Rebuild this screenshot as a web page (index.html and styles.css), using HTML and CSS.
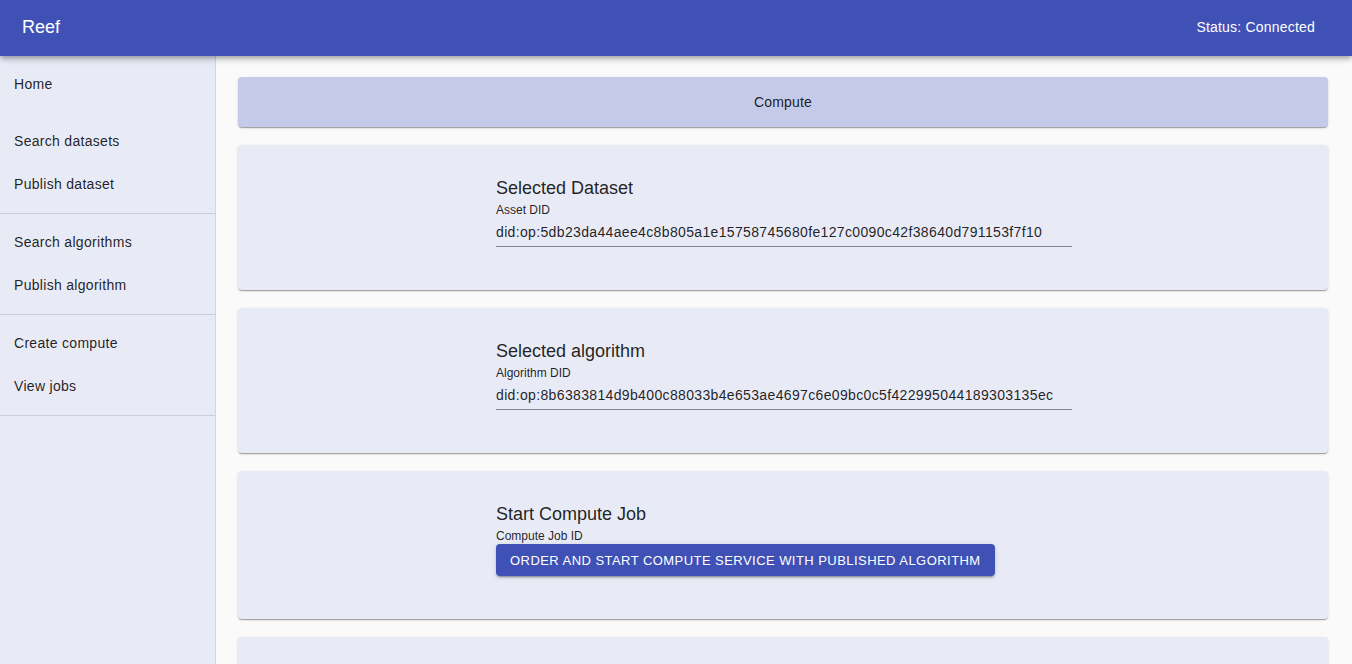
FILE: index.html
```html
<!DOCTYPE html>
<html lang="en">
<head>
<meta charset="utf-8">
<title>Reef</title>
<link rel="stylesheet" href="styles.css">
</head>
<body>
<header class="appbar">
  <div class="brand">Reef</div>
  <div class="status">Status: Connected</div>
</header>
<div class="layout">
  <nav class="sidebar">
    <ul class="nav-list nav-home">
      <li class="nav-item">Home</li>
    </ul>
    <ul class="nav-list nav-first">
      <li class="nav-item">Search datasets</li>
      <li class="nav-item">Publish dataset</li>
    </ul>
    <ul class="nav-list">
      <li class="nav-item">Search algorithms</li>
      <li class="nav-item">Publish algorithm</li>
    </ul>
    <ul class="nav-list">
      <li class="nav-item">Create compute</li>
      <li class="nav-item">View jobs</li>
    </ul>
  </nav>
  <main class="main">
    <div class="title-card">Compute</div>
    <section class="card">
      <div class="card-body">
        <h2 class="card-title">Selected Dataset</h2>
        <div class="field-label">Asset DID</div>
        <div class="field-input">did:op:5db23da44aee4c8b805a1e15758745680fe127c0090c42f38640d791153f7f10</div>
      </div>
    </section>
    <section class="card">
      <div class="card-body">
        <h2 class="card-title">Selected algorithm</h2>
        <div class="field-label">Algorithm DID</div>
        <div class="field-input">did:op:8b6383814d9b400c88033b4e653ae4697c6e09bc0c5f422995044189303135ec</div>
      </div>
    </section>
    <section class="card">
      <div class="card-body">
        <h2 class="card-title">Start Compute Job</h2>
        <div class="field-label">Compute Job ID</div>
        <button class="btn-primary">Order and start compute service with published algorithm</button>
      </div>
    </section>
    <section class="card card-last"></section>
  </main>
</div>
</body>
</html>
```
FILE: styles.css
```css
* { box-sizing: border-box; }
html, body { margin: 0; padding: 0; height: 100%; overflow: hidden; }
body {
  font-family: "Liberation Sans", Arial, Helvetica, sans-serif;
  color: rgba(0, 0, 0, 0.87);
  background: #fafafa;
  letter-spacing: 0.15px;
}
.appbar {
  height: 56px;
  background: #3f51b5;
  color: #fff;
  display: flex;
  align-items: center;
  justify-content: space-between;
  padding: 0 37px 0 22px;
  box-shadow: 0 2px 4px -1px rgba(0,0,0,0.2), 0 4px 5px 0 rgba(0,0,0,0.14), 0 1px 10px 0 rgba(0,0,0,0.12);
  position: relative;
  z-index: 2;
}
.brand { font-size: 18px; letter-spacing: 0; padding-bottom: 2px; }
.status { font-size: 14px; padding-bottom: 3px; letter-spacing: 0.2px; }
.layout { display: flex; height: calc(100% - 56px); }
.sidebar {
  width: 216px;
  flex: none;
  background: #e8eaf6;
  border-right: 1px solid #d3d5df;
}
.nav-list {
  list-style: none;
  margin: 0;
  padding: 7px 0 8px;
  border-bottom: 1px solid rgba(0,0,0,0.12);
}
.nav-home { border-bottom: none; padding: 7px 0 0; }
.nav-first { padding-top: 15px; }
.nav-item {
  height: 42px;
  line-height: 42px;
  padding-left: 14px;
  font-size: 14px;
  letter-spacing: 0.3px;
  color: rgba(0,0,0,0.87);
}
.nav-list .nav-item:last-child { height: 43px; line-height: 44px; }
.nav-home .nav-item:last-child { height: 42px; line-height: 42px; }
.main {
  flex: 1;
  padding: 21px 24px 0 22px;
  display: flex;
  flex-direction: column;
  gap: 18px;
  min-width: 0;
}
.title-card {
  height: 50px;
  flex: none;
  background: #c5cae9;
  border-radius: 4px;
  display: flex;
  align-items: center;
  justify-content: center;
  font-size: 14px;
  padding-bottom: 1px;
  box-shadow: 0 2px 1px -1px rgba(0,0,0,0.2), 0 1px 1px 0 rgba(0,0,0,0.14), 0 1px 3px 0 rgba(0,0,0,0.12);
}
.card {
  flex: none;
  background: #e8eaf6;
  border-radius: 4px;
  padding: 32px 0 43px;
  box-shadow: 0 2px 1px -1px rgba(0,0,0,0.2), 0 1px 1px 0 rgba(0,0,0,0.14), 0 1px 3px 0 rgba(0,0,0,0.12);
}
.card-last { height: 60px; }
.card-body {
  width: 576px;
  margin: 0 auto;
  position: relative;
  left: 1px;
}
.card-title {
  margin: 0;
  font-size: 18px;
  font-weight: normal;
  line-height: 22px;
  letter-spacing: 0;
}
.field-label {
  font-size: 12px;
  line-height: 16px;
  margin-top: 3px;
  letter-spacing: 0;
}
.field-input {
  margin-top: 3px;
  font-size: 14px;
  line-height: 20px;
  padding: 1px 0 4px;
  border-bottom: 1px solid rgba(0,0,0,0.42);
  white-space: nowrap;
  overflow: hidden;
  letter-spacing: 0.35px;
}
.btn-primary {
  display: inline-block;
  height: 32px;
  padding: 0 14px;
  border: none;
  border-radius: 4px;
  background: #3f51b5;
  color: #fff;
  font-family: inherit;
  font-size: 13px;
  letter-spacing: 0.45px;
  text-transform: uppercase;
  box-shadow: 0 3px 1px -2px rgba(0,0,0,0.2), 0 2px 2px 0 rgba(0,0,0,0.14), 0 1px 5px 0 rgba(0,0,0,0.12);
}
```
